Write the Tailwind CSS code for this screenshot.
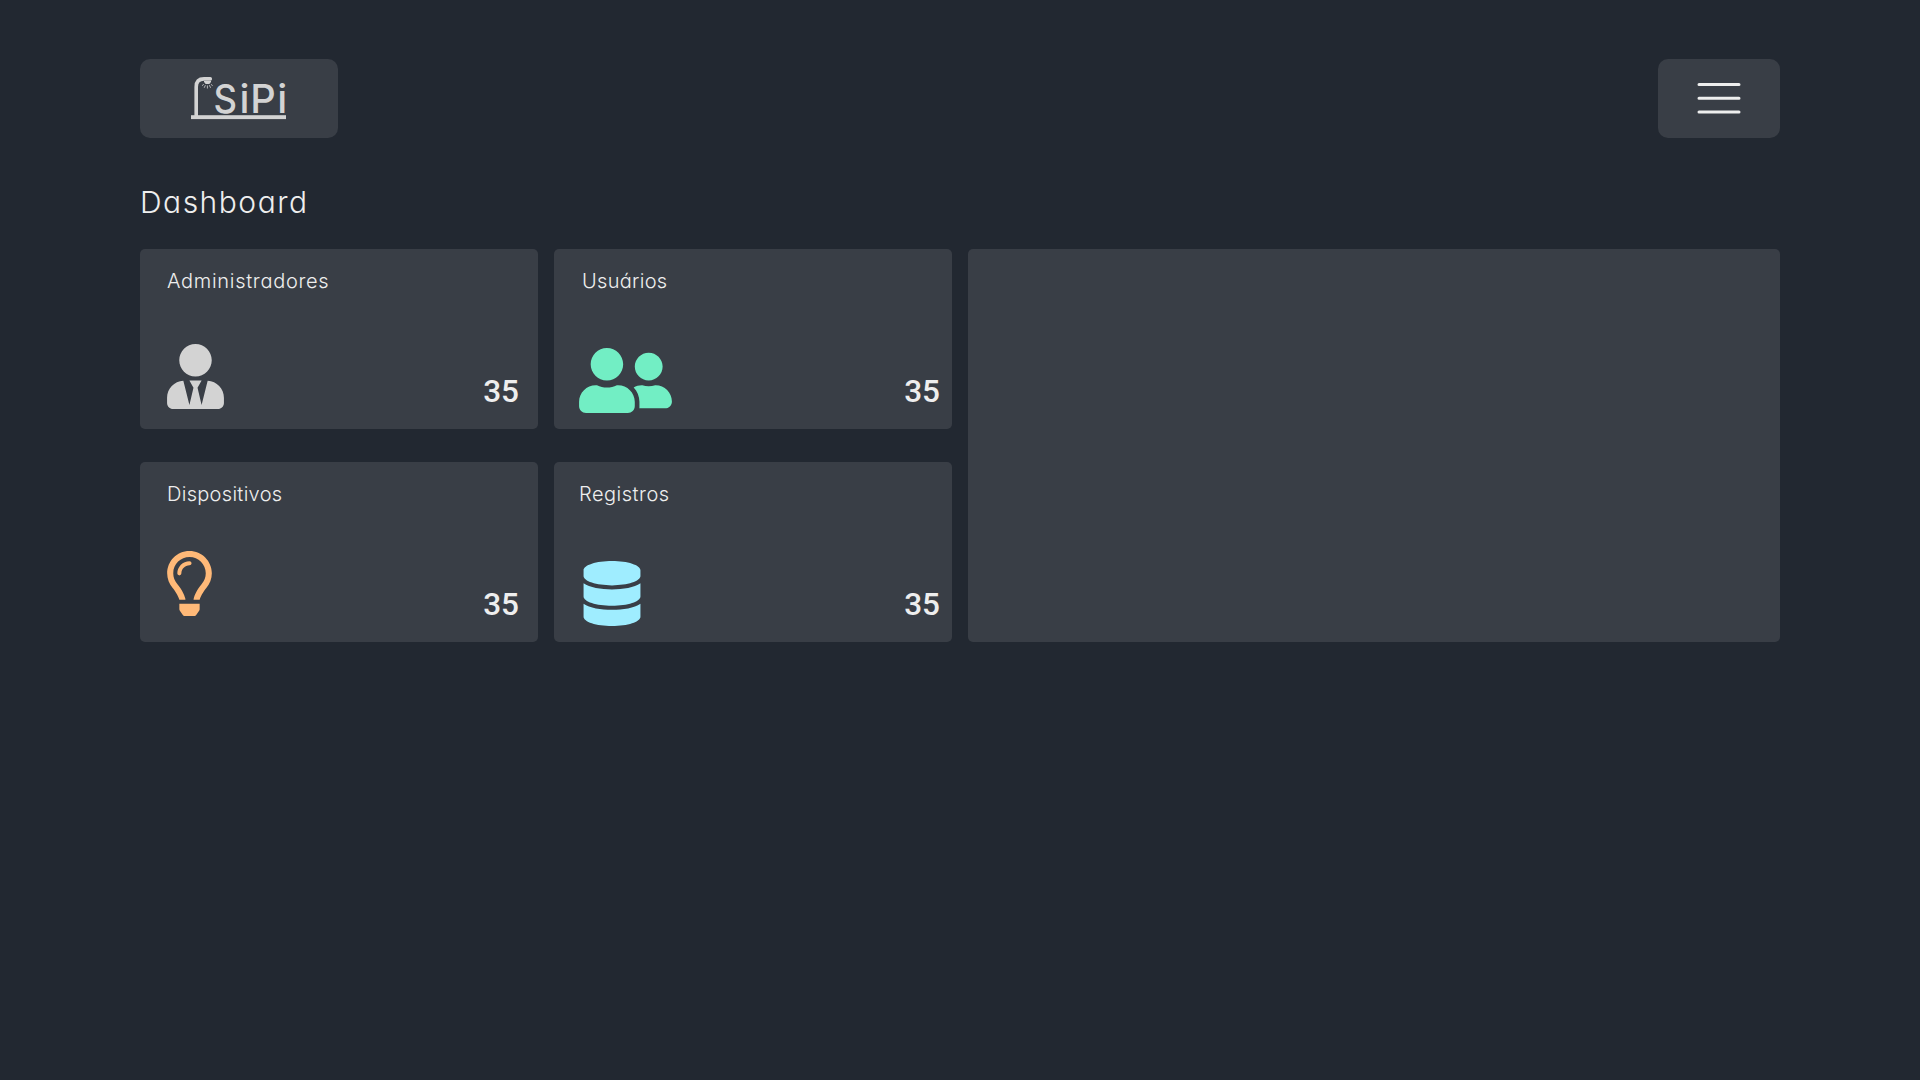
<!DOCTYPE html>
<html lang="pt-BR">
<head>
<meta charset="utf-8">
<title>SiPi</title>
<script src="https://cdn.jsdelivr.net/npm/@tailwindcss/browser@4"></script>
</head>
<body class="min-h-screen bg-[#222831] px-[140px] pt-[59px] font-['Inter',sans-serif] text-[#eeeeee] [font-feature-settings:'cv11']">
  <header class="flex h-[79px] justify-between">
    <a class="flex w-[198px] items-center justify-center rounded-[10px] bg-[#393e46]">
      <svg class="h-[79px] w-[198px]" viewBox="140 59 198 79" fill="#d3d3d3">
        <rect x="191" y="115.2" width="95" height="3.9"/>
        <path d="M196.2 117V87Q196.2 78.9 204 78.9H210.3" fill="none" stroke="#d3d3d3" stroke-width="3.6" stroke-linecap="round"/>
        <path d="M204 81h7v1l-1.7 2h-3.6l-1.7-2z"/>
        <path d="M203.8 84.3l-1.8 1.4M205.4 85.2l-1.2 2.6M207.4 85.5v3M209.4 85.2l1.2 2.6M210.9 84.3l1.8 1.4" fill="none" stroke="#d3d3d3" stroke-width=".8"/>
        <g font-family="Inter, sans-serif" font-size="39.5" font-weight="500">
          <text x="213.4" y="113" textLength="23.5" lengthAdjust="spacingAndGlyphs">S</text>
          <text x="250.3" y="113" textLength="25.5" lengthAdjust="spacingAndGlyphs">P</text>
          <text x="239.4" y="113">i</text>
          <text x="277.2" y="113">i</text>
        </g>
      </svg>
    </a>
    <button class="flex w-[122px] items-center justify-center rounded-[10px] bg-[#393e46]">
      <svg class="h-[79px] w-[122px]" viewBox="1658 59 122 79" stroke="#eeeeee" stroke-width="3" stroke-linecap="round">
        <path d="M1699 84.5h40M1699 98.3h40M1699 112h40"/>
      </svg>
    </button>
  </header>

  <h1 class="mt-[44px] h-10 text-[30px] leading-10 font-light tracking-[1.5px]">Dashboard</h1>

  <main class="mt-[27px] grid grid-cols-[398px_398px_812px] grid-rows-[180px_180px] gap-x-4 gap-y-[33px]">
    <section class="flex flex-col justify-between rounded-[5px] bg-[#393e46] pt-[17px] pr-[19px] pb-5 pl-[27px]">
      <h2 class="text-[20px] leading-[30px] font-light tracking-[0.7px]">Administradores</h2>
      <div class="flex items-end justify-between">
        <svg class="h-[65px] w-[57px]" viewBox="0 0 448 512" fill="#d3d3d3"><path d="M224 256c70.7 0 128-57.3 128-128S294.7 0 224 0 96 57.3 96 128s57.3 128 128 128zm95.8 32.6L272 480l-32-136 32-56h-96l32 56-32 136-47.8-191.4C56.9 292 0 350.3 0 422.4V464c0 26.5 21.5 48 48 48h352c26.5 0 48-21.5 48-48v-41.6c0-72.1-56.9-130.4-128.2-133.8z"/></svg>
        <span class="font-['Roboto',sans-serif] text-[31.5px] leading-[34px] font-medium">35</span>
      </div>
    </section>
    <section class="flex flex-col justify-between rounded-[5px] bg-[#393e46] pt-[17px] pr-3 pb-4 pl-[25px]">
      <h2 class="pl-[3px] text-[20px] leading-[30px] font-light tracking-[0.3px]">Usuários</h2>
      <div class="flex items-end justify-between">
        <svg class="h-[65px] w-[93px]" viewBox="0 32 640 448" fill="#72eec4"><path d="M192 256c61.9 0 112-50.1 112-112S253.9 32 192 32 80 82.1 80 144s50.1 112 112 112zm76.8 32h-8.3c-20.8 10-43.9 16-68.5 16s-47.6-6-68.5-16h-8.3C51.6 288 0 339.6 0 403.2V432c0 26.5 21.5 48 48 48h288c26.5 0 48-21.5 48-48v-28.8c0-63.6-51.6-115.2-115.2-115.2zM480 256c53 0 96-43 96-96s-43-96-96-96-96 43-96 96 43 96 96 96zm48 32h-3.8c-13.9 4.8-28.6 8-44.2 8s-30.3-3.2-44.2-8H432c-20.4 0-39.2 5.9-55.7 15.4 24.4 26.3 39.7 61.2 39.7 99.8v38.4c0 2.2-.5 4.3-.6 6.4H592c26.5 0 48-21.5 48-48 0-61.9-50.1-112-112-112z"/></svg>
        <span class="pb-1 font-['Roboto',sans-serif] text-[31.5px] leading-[34px] font-medium">35</span>
      </div>
    </section>
    <section class="row-span-2 rounded-[5px] bg-[#393e46]"></section>
    <section class="flex flex-col justify-between rounded-[5px] bg-[#393e46] pt-[17px] pr-[19px] pb-5 pl-[27px]">
      <h2 class="text-[20px] leading-[30px] font-light tracking-[0.3px]">Dispositivos</h2>
      <div class="flex items-end justify-between">
        <svg class="mb-[6px] h-[65px] w-[45px]" viewBox="0 0 352 512" fill="#ffb978"><path d="M176 80c-52.94 0-96 43.06-96 96 0 8.84 7.16 16 16 16s16-7.16 16-16c0-35.3 28.72-64 64-64 8.84 0 16-7.16 16-16s-7.16-16-16-16zM96.06 459.17c0 3.15.93 6.22 2.68 8.84l24.51 36.84c2.97 4.46 7.97 7.14 13.32 7.14h78.85c5.36 0 10.36-2.68 13.32-7.14l24.51-36.84c1.74-2.62 2.67-5.7 2.68-8.84l.05-43.18H96.02l.04 43.18zM176 0C73.72 0 0 82.97 0 176c0 44.37 16.45 84.85 43.56 115.78 16.64 18.99 42.74 58.8 52.42 92.16v.06h48v-.12c-.01-4.77-.72-9.51-2.15-14.07-5.59-17.81-22.82-64.86-62.17-109.67-20.54-23.43-31.52-53.15-31.61-84.14-.2-73.64 59.67-128 127.95-128 70.58 0 128 57.42 128 128 0 30.97-11.24 60.85-31.65 84.14-39.11 44.61-56.42 91.47-62.1 109.46a47.507 47.507 0 0 0-2.22 14.3v.1h48v-.05c9.68-33.37 35.78-73.18 52.42-92.16C335.55 260.85 352 220.37 352 176 352 78.8 273.2 0 176 0z"/></svg>
        <span class="font-['Roboto',sans-serif] text-[31.5px] leading-[34px] font-medium">35</span>
      </div>
    </section>
    <section class="flex flex-col justify-between rounded-[5px] bg-[#393e46] pt-[17px] pr-3 pb-4 pl-[25px]">
      <h2 class="text-[20px] leading-[30px] font-light tracking-[0.5px]">Registros</h2>
      <div class="flex items-end justify-between">
        <svg class="ml-1 h-[65px] w-[58px]" viewBox="0 0 448 512" fill="#9fedff"><path d="M448 73.143v45.714C448 159.143 347.667 192 224 192S0 159.143 0 118.857V73.143C0 32.857 100.333 0 224 0s224 32.857 224 73.143zM448 176v102.857C448 319.143 347.667 352 224 352S0 319.143 0 278.857V176c48.125 33.143 136.208 48.572 224 48.572S399.874 209.143 448 176zm0 160v102.857C448 479.143 347.667 512 224 512S0 479.143 0 438.857V336c48.125 33.143 136.208 48.572 224 48.572S399.874 369.143 448 336z"/></svg>
        <span class="pb-1 font-['Roboto',sans-serif] text-[31.5px] leading-[34px] font-medium">35</span>
      </div>
    </section>
  </main>
</body>
</html>
